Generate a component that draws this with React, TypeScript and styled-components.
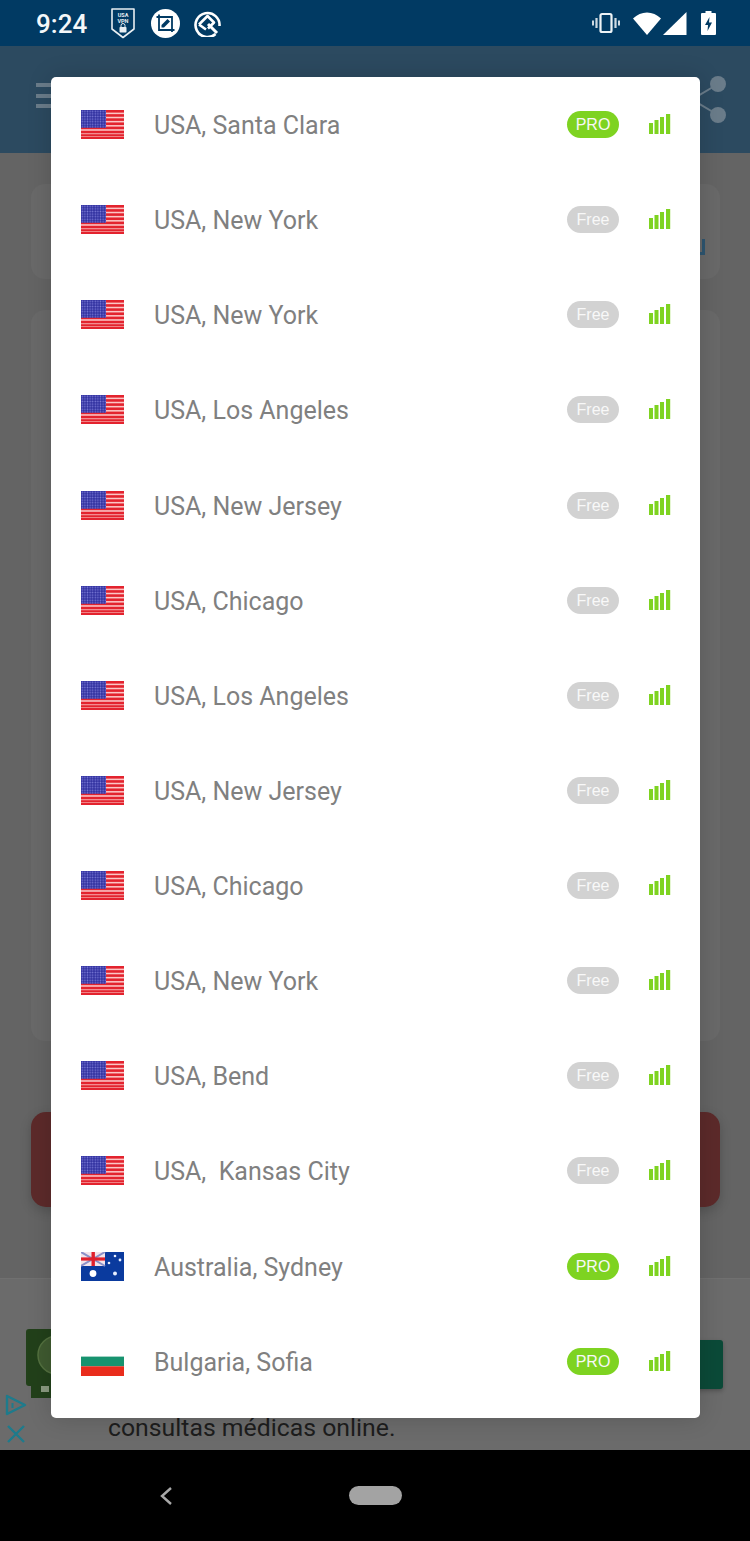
import React from "react";
import styled, { createGlobalStyle } from "styled-components";

const Global = createGlobalStyle`
  html, body { margin: 0; padding: 0; background: #000; }
  body { font-family: Roboto, "Liberation Sans", sans-serif; }
  * { box-sizing: border-box; }
`;

const Screen = styled.div`
  position: relative;
  width: 750px;
  height: 1541px;
  display: flex;
  flex-direction: column;
  overflow: hidden;
  background: #646464;
`;

const StatusBar = styled.div`
  height: 46px;
  flex: none;
  background: #013a63;
  display: flex;
  align-items: center;
  padding: 0 34px 0 36px;
  color: #f4f7f9;
`;

const Clock = styled.span`
  font-size: 26px;
  font-weight: 500;
  width: 75px;
  margin-top: 2px;
`;

const NotifyIcons = styled.div`
  display: flex;
  align-items: center;
  gap: 16px;
  flex: 1;
`;

const SystemIcons = styled.div`
  display: flex;
  align-items: center;
`;

const Header = styled.div`
  height: 107px;
  flex: none;
  background: #2c4a60;
  display: flex;
  align-items: center;
  justify-content: space-between;
  padding: 0 22px 8px 36px;
`;

const Burger = styled.div`
  width: 24px;
  display: flex;
  flex-direction: column;
  gap: 6.5px;
  & > i {
    display: block;
    height: 4px;
    background: #6a7c8a;
  }
`;

const Main = styled.div`
  flex: 1;
  display: flex;
  flex-direction: column;
  padding: 31px 30px 0 31px;
`;

const Card = styled.div<{ $h: number; $mb: number }>`
  position: relative;
  height: ${(p) => p.$h}px;
  margin-bottom: ${(p) => p.$mb}px;
  background: #696969;
  border-radius: 14px;
`;

const CardMark = styled.div`
  position: absolute;
  right: 15px;
  top: 55px;
  width: 5px;
  height: 16px;
  border-right: 3px solid #2d5570;
  border-bottom: 3px solid #2d5570;
`;

const RedButton = styled.div`
  height: 95px;
  background: #5c2a2a;
  border-radius: 15px;
  box-shadow: 0 4px 12px rgba(0, 0, 0, 0.18);
`;

const Ad = styled.div`
  position: relative;
  height: 172px;
  flex: none;
  background: #6b6b6b;
  border-top: 1px solid #707070;
  display: flex;
  flex-direction: column;
  padding: 50px 27px 0 26px;
`;

const AdTop = styled.div`
  display: flex;
  justify-content: space-between;
  align-items: flex-start;
  height: 80px;
`;

const AdIcon = styled.svg`
  display: block;
  width: 60px;
  height: 70px;
`;

const AdButton = styled.div`
  width: 60px;
  height: 49px;
  margin-top: 11px;
  background: #0b4a38;
  border-radius: 3px;
  box-shadow: 0 2px 4px rgba(0, 0, 0, 0.25);
`;

const AdText = styled.div`
  margin: 5px 0 0 82px;
  font-size: 24.8px;
  line-height: 28px;
  color: #1d1d1d;
`;

const AdChoices = styled.div`
  position: absolute;
  left: 5px;
  top: 115px;
  display: flex;
  flex-direction: column;
  gap: 8px;
`;

const NavBar = styled.div`
  height: 91px;
  flex: none;
  background: #000;
  display: flex;
  align-items: center;
  padding: 0 0 0 158px;
`;

const HomePill = styled.div`
  width: 53px;
  height: 19px;
  margin-left: 175px;
  border-radius: 10px;
  background: #a3a3a3;
`;

const Dialog = styled.div`
  position: absolute;
  left: 51px;
  top: 77px;
  width: 649px;
  height: 1341px;
  background: #fff;
  border-radius: 5px;
  box-shadow: 0 0 24px rgba(0, 0, 0, 0.16);
`;

const Row = styled.div`
  height: 95.14px;
  display: grid;
  grid-template-columns: 43px 1fr 52px 52px;
  align-items: center;
  padding: 0 29px 0 30px;
`;

const FlagBox = styled.svg`
  display: block;
  width: 43px;
  height: 29px;
`;

const City = styled.span`
  margin: 3px 0 0 30px;
  font-size: 25px;
  line-height: 30px;
  color: #808080;
  white-space: pre;
`;

const Badge = styled.span<{ $pro: boolean }>`
  height: 27px;
  padding-top: 1px;
  border-radius: 14px;
  display: flex;
  align-items: center;
  justify-content: center;
  font-family: "Liberation Sans", Arial, sans-serif;
  font-size: 16px;
  color: #f8f8f8;
  background: ${(p) => (p.$pro ? "#7ed321" : "#d2d2d2")};
`;

const BarsBox = styled.svg`
  display: block;
  width: 22px;
  height: 20px;
  margin: -1px 0 0 30px;
`;

const UsaFlag = () => (
  <FlagBox viewBox="0 0 43 29">
    <defs>
      <pattern id="stars" width="2.6" height="2.6" patternUnits="userSpaceOnUse">
        <rect width="2.6" height="2.6" fill="#30309f" />
        <circle cx="1.3" cy="1.3" r="0.8" fill="#7a7ad6" />
      </pattern>
    </defs>
    <rect width="43" height="29" fill="#fbc6c6" />
    {[0, 1, 2, 3, 4, 5].map((i) => (
      <rect key={i} y={i * 4.15} width="43" height="2.6" fill="#e3232e" />
    ))}
    <rect y="24.2" width="43" height="4.8" fill="#e3232e" />
    <rect y="26" width="43" height="0.8" fill="#f29a9a" />
    <rect width="25" height="17.800" fill="url(#stars)" />
  </FlagBox>
);

const AusFlag = () => (
  <FlagBox viewBox="0 0 43 29">
    <rect width="43" height="29" fill="#0a3a9e" />
    <rect width="24" height="14" fill="#f3e4ea" />
    <path d="M0 0L24 14M24 0L0 14" stroke="#8a90c8" strokeWidth="2" />
    <rect x="10.500" width="3.400" height="14" fill="#e0202c" />
    <rect y="5.400" width="24" height="3.200" fill="#e0202c" />
    <circle cx="12" cy="21.500" r="3.400" fill="#fff" />
    <circle cx="34" cy="21.500" r="2" fill="#e8efff" />
    <circle cx="34" cy="4" r="1.300" fill="#e8efff" />
    <circle cx="28" cy="11" r="1.300" fill="#e8efff" />
    <circle cx="39" cy="8" r="1.400" fill="#e8efff" />
  </FlagBox>
);

const BgFlag = () => (
  <FlagBox viewBox="0 0 43 29">
    <rect width="43" height="9.600" fill="#fff" />
    <rect y="9.600" width="43" height="9.700" fill="#17936f" />
    <rect y="19.300" width="43" height="9.700" fill="#e92c1c" />
  </FlagBox>
);

const Bars = () => (
  <BarsBox viewBox="0 0 22 20">
    <rect x="0" y="9" width="4" height="11" fill="#7ed321" />
    <rect x="5.500" y="6" width="4" height="14" fill="#7ed321" />
    <rect x="11" y="3" width="4" height="17" fill="#7ed321" />
    <rect x="17" y="0" width="4.200" height="20" fill="#7ed321" />
  </BarsBox>
);

const servers: { flag: "us" | "au" | "bg"; name: string; pro: boolean }[] = [
  { flag: "us", name: "USA, Santa Clara", pro: true },
  { flag: "us", name: "USA, New York", pro: false },
  { flag: "us", name: "USA, New York", pro: false },
  { flag: "us", name: "USA, Los Angeles", pro: false },
  { flag: "us", name: "USA, New Jersey", pro: false },
  { flag: "us", name: "USA, Chicago", pro: false },
  { flag: "us", name: "USA, Los Angeles", pro: false },
  { flag: "us", name: "USA, New Jersey", pro: false },
  { flag: "us", name: "USA, Chicago", pro: false },
  { flag: "us", name: "USA, New York", pro: false },
  { flag: "us", name: "USA, Bend", pro: false },
  { flag: "us", name: "USA,  Kansas City", pro: false },
  { flag: "au", name: "Australia, Sydney", pro: true },
  { flag: "bg", name: "Bulgaria, Sofia", pro: true },
];

const Shield = () => (
  <svg width="24" height="31" viewBox="0 0 24 31">
    <path d="M1 1H23V21L12 29.500L1 21Z" fill="none" stroke="#e8eef2" strokeWidth="1.600" strokeLinejoin="round" />
    <text x="12" y="8.500" fontSize="5.500" fontWeight="700" fill="#e8eef2" textAnchor="middle" fontFamily="Roboto">USA</text>
    <text x="12" y="14.500" fontSize="5.500" fontWeight="700" fill="#e8eef2" textAnchor="middle" fontFamily="Roboto">VPN</text>
    <rect x="8.500" y="19" width="7" height="5.500" rx="0.800" fill="#e8eef2" />
    <path d="M10 19v-1.500a2 2 0 0 1 4 0V19" fill="none" stroke="#e8eef2" strokeWidth="1" />
  </svg>
);

const ScreenshotEdit = () => (
  <svg width="29" height="29" viewBox="0 0 29 29">
    <circle cx="14.500" cy="14.500" r="14.500" fill="#fff" />
    <path d="M5.500 8H21V23M8 5.500V21H23.500" fill="none" stroke="#013a63" strokeWidth="1.800" />
    <path d="M10.500 18.500V16L16.500 10L19 12.500L13 18.500Z" fill="#013a63" />
  </svg>
);

const QIcon = () => (
  <svg width="27" height="28" viewBox="0 0 27 28" style={{ marginLeft: -2 }}>
    <path d="M21.500 25A12 12 0 1 1 25.500 17" fill="none" stroke="#fff" strokeWidth="2.600" />
    <path d="M5 15.500L13.500 7L20 13.500L14 19.500" fill="none" stroke="#fff" strokeWidth="2.600" strokeLinejoin="round" />
    <path d="M5 15.500L12 20.500" fill="none" stroke="#fff" strokeWidth="2.600" />
    <path d="M14 15L23 24" stroke="#fff" strokeWidth="3" />
  </svg>
);

const Vibrate = () => (
  <svg width="28" height="22" viewBox="0 0 28 22" style={{ marginRight: 13 }}>
    <rect x="8.500" y="2" width="11" height="18" rx="1.500" fill="none" stroke="#eef3f6" strokeWidth="2.200" />
    <path d="M4.500 6V16M23.500 6V16" stroke="#cfdae2" strokeWidth="2.200" />
    <path d="M1 8.500V13.500M27 8.500V13.500" stroke="#cfdae2" strokeWidth="2" />
  </svg>
);

const Wifi = () => (
  <svg width="28" height="23" viewBox="0 0 28 23">
    <path d="M0 6.500C8-1.500 20-1.500 28 6.500L14 23Z" fill="#fff" />
  </svg>
);

const Signal = () => (
  <svg width="24" height="23" viewBox="0 0 24 23" style={{ marginLeft: 2, marginRight: 14 }}>
    <path d="M23.500 0V23H0Z" fill="#fff" />
  </svg>
);

const Battery = () => (
  <svg width="15" height="24" viewBox="0 0 15 24">
    <path d="M4.500 0H10.500V2H14A1 1 0 0 1 15 3V23A1 1 0 0 1 14 24H1A1 1 0 0 1 0 23V3A1 1 0 0 1 1 2H4.500Z" fill="#fff" />
    <path d="M8.500 6L4 14H7L6.500 20L11 11.500H8Z" fill="#013a63" />
  </svg>
);

const Share = () => (
  <svg width="30" height="48" viewBox="0 0 30 48" style={{ marginTop: 8 }}>
    <path d="M20 8L0 20M0 27L20 39" stroke="#6a7c8a" strokeWidth="2" fill="none" />
    <circle cx="20" cy="8" r="8" fill="#6a7c8a" />
    <circle cx="20" cy="39" r="8" fill="#6a7c8a" />
  </svg>
);

export default function App() {
  return (
    <Screen>
      <Global />
      <StatusBar>
        <Clock>9:24</Clock>
        <NotifyIcons>
          <Shield />
          <ScreenshotEdit />
          <QIcon />
        </NotifyIcons>
        <SystemIcons>
          <Vibrate />
          <Wifi />
          <Signal />
          <Battery />
        </SystemIcons>
      </StatusBar>
      <Header>
        <Burger>
          <i />
          <i />
          <i />
        </Burger>
        <Share />
      </Header>
      <Main>
        <Card $h={95} $mb={31}>
          <CardMark />
        </Card>
        <Card $h={731} $mb={71} />
        <RedButton />
      </Main>
      <Ad>
        <AdTop>
          <AdIcon viewBox="0 0 60 70">
            <path d="M0 3a3 3 0 0 1 3-3H60V57H25V69H5V57H3a3 3 0 0 1-3-3Z" fill="#22401a" />
            <circle cx="31" cy="26" r="19" fill="#3f5a30" stroke="#53703f" strokeWidth="1.500" />
            <rect x="15" y="57" width="8" height="6" fill="#8a9a80" />
          </AdIcon>
          <AdButton />
        </AdTop>
        <AdText>consultas médicas online.</AdText>
        <AdChoices>
          <svg width="22" height="22" viewBox="0 0 22 22">
            <path d="M2 2L20 11L2 20Z" fill="none" stroke="#1e7b8c" strokeWidth="2.400" strokeLinejoin="round" />
            <path d="M7.500 9V14" stroke="#1e7b8c" strokeWidth="2" />
          </svg>
          <svg width="22" height="20" viewBox="0 0 22 20">
            <path d="M3 2L19 18M19 2L3 18" stroke="#1e7b8c" strokeWidth="2.400" />
          </svg>
        </AdChoices>
      </Ad>
      <NavBar>
        <svg width="16" height="22" viewBox="0 0 16 22">
          <path d="M13 3L4 11L13 19" fill="none" stroke="#a8a8a8" strokeWidth="2.400" />
        </svg>
        <HomePill />
      </NavBar>
      <Dialog>
        {servers.map((s, i) => (
          <Row key={i}>
            {s.flag === "us" ? <UsaFlag /> : s.flag === "au" ? <AusFlag /> : <BgFlag />}
            <City>{s.name}</City>
            <Badge $pro={s.pro}>{s.pro ? "PRO" : "Free"}</Badge>
            <Bars />
          </Row>
        ))}
      </Dialog>
    </Screen>
  );
}
